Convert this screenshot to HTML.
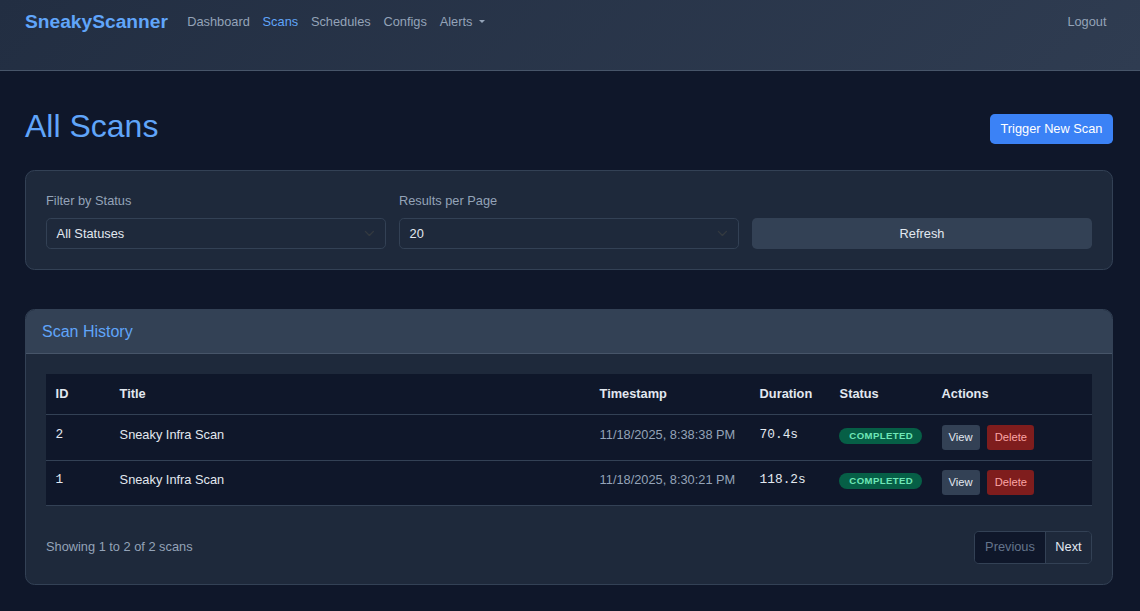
<!DOCTYPE html>
<html lang="en">
<head>
<meta charset="utf-8">
<title>All Scans - SneakyScanner</title>
<style>
*{box-sizing:border-box}
html,body{margin:0;padding:0}
body{width:1140px;height:611px;overflow:hidden;background:#0f172a;color:#e2e8f0;font-family:"Liberation Sans",Arial,sans-serif;font-size:12.8px;line-height:19.2px}
.nav{position:absolute;left:0;top:0;width:1140px;height:71px;background:linear-gradient(135deg,#222e42 0%,#2f3c51 100%);border-bottom:1px solid #475569}
.brand{position:absolute;left:25px;top:8px;font-size:19.2px;font-weight:700;color:#60a5fa;line-height:28.8px}
.links{position:absolute;left:180.8px;top:12px;display:flex}
.nl{padding:0 6.4px;color:#94a3b8;white-space:nowrap}
.nl.act{color:#60a5fa}
.caret{display:inline-block;margin-left:.255em;vertical-align:.255em;border-top:.3em solid;border-left:.3em solid transparent;border-right:.3em solid transparent}
h1{position:absolute;left:25px;top:106.9px;margin:0;font-size:32px;font-weight:400;color:#60a5fa;line-height:38.4px}
.btnp{position:absolute;left:990px;top:114px;width:123px;height:30px;background:#3b82f6;color:#fff;border-radius:4.8px;line-height:30px;text-align:center}
.card{position:absolute;left:25px;width:1088px;background:#1e293b;border:1px solid #334155;border-radius:9.6px}
.lbl{position:absolute;color:#94a3b8}
.sel{position:absolute;top:47px;width:340px;height:31px;border:1px solid #334155;border-radius:4.8px;background:#1e293b;color:#e2e8f0;line-height:29px;padding-left:9.6px}
.chev{position:absolute;right:9.9px;top:9.3px;width:10.8px;height:10.8px}
.refresh{position:absolute;left:726px;top:47px;width:340px;height:31px;background:#334155;border-radius:4.8px;color:#e2e8f0;line-height:31px;text-align:center}
.chead{height:44px;background:#334155;border-bottom:1px solid #475569;border-radius:8.6px 8.6px 0 0;padding:11.85px 16px 0;font-size:16px;line-height:19.2px;color:#60a5fa}
table{position:absolute;left:20px;top:64px;width:1046px;table-layout:fixed;border-collapse:separate;border-spacing:0;background:#0f172a}
th{text-align:left;font-weight:700;color:#e2e8f0;height:41px;padding:9.6px 9.6px 0;border-bottom:1px solid #334155;vertical-align:top}
td{height:46px;padding:10px 9.6px 0;border-bottom:1px solid #334155;color:#e2e8f0;vertical-align:top;white-space:nowrap}
.mono{font-family:"Liberation Mono",monospace}
.muted{color:#94a3b8}
.badge{display:inline-block;width:83.2px;height:16px;border-radius:8px;background:#065f46;color:#6ee7b7;font-size:9.6px;font-weight:700;letter-spacing:.4px;line-height:16px;text-align:center;vertical-align:top;margin-top:3px;margin-left:-.6px;padding-left:1.3px}
.bs{display:inline-block;height:25px;border-radius:3.2px;font-size:11.2px;line-height:25px;text-align:center;vertical-align:top}
.bv{width:38px;background:#334155;color:#e2e8f0;margin-right:4.2px}
.bd{width:47px;background:#7f1d1d;color:#fca5a5}
.show{position:absolute;left:20px;top:227px;color:#94a3b8}
.pg{position:absolute;left:948px;top:221px;height:33px;display:flex;border:1px solid #334155;border-radius:4.8px;overflow:hidden;line-height:29px}
.pg .p{width:71px;text-align:center;background:#0f172a;color:#64748b;border-right:1px solid #334155}
.pg .n{width:45px;text-align:center;background:#1e293b;color:#e2e8f0}
tr.r2 td{height:45px;padding-top:9px}
</style>
</head>
<body>
<div class="nav">
  <div class="brand">SneakyScanner</div>
  <div class="links">
    <div class="nl">Dashboard</div>
    <div class="nl act">Scans</div>
    <div class="nl">Schedules</div>
    <div class="nl">Configs</div>
    <div class="nl">Alerts <span class="caret"></span></div>
  </div>
  <div class="nl" style="position:absolute;left:1061px;top:12px">Logout</div>
</div>
<h1>All Scans</h1>
<div class="btnp">Trigger New Scan</div>

<div class="card" style="top:170px;height:100px">
  <div class="lbl" style="left:20px;top:20.2px">Filter by Status</div>
  <div class="sel" style="left:20px">All Statuses<svg class="chev" viewBox="0 0 16 16"><path d="M2 5l6 6 6-6" fill="none" stroke="#343a40" stroke-width="1.9" stroke-linecap="round" stroke-linejoin="round"/></svg></div>
  <div class="lbl" style="left:373px;top:20.2px">Results per Page</div>
  <div class="sel" style="left:373px">20<svg class="chev" viewBox="0 0 16 16"><path d="M2 5l6 6 6-6" fill="none" stroke="#343a40" stroke-width="1.9" stroke-linecap="round" stroke-linejoin="round"/></svg></div>
  <div class="refresh">Refresh</div>
</div>

<div class="card" style="top:309px;height:276px">
  <div class="chead">Scan History</div>
  <table>
    <colgroup><col style="width:64px"><col style="width:480px"><col style="width:160px"><col style="width:80px"><col style="width:102px"><col></colgroup>
    <tr><th>ID</th><th>Title</th><th>Timestamp</th><th>Duration</th><th>Status</th><th>Actions</th></tr>
    <tr><td class="mono">2</td><td>Sneaky Infra Scan</td><td class="muted">11/18/2025, 8:38:38 PM</td><td class="mono">70.4s</td><td><span class="badge">COMPLETED</span></td><td><span class="bs bv">View</span> <span class="bs bd">Delete</span></td></tr>
    <tr class="r2"><td class="mono">1</td><td>Sneaky Infra Scan</td><td class="muted">11/18/2025, 8:30:21 PM</td><td class="mono">118.2s</td><td><span class="badge">COMPLETED</span></td><td><span class="bs bv">View</span> <span class="bs bd">Delete</span></td></tr>
  </table>
  <div class="show">Showing 1 to 2 of 2 scans</div>
  <div class="pg"><div class="p">Previous</div><div class="n">Next</div></div>
</div>
</body>
</html>
